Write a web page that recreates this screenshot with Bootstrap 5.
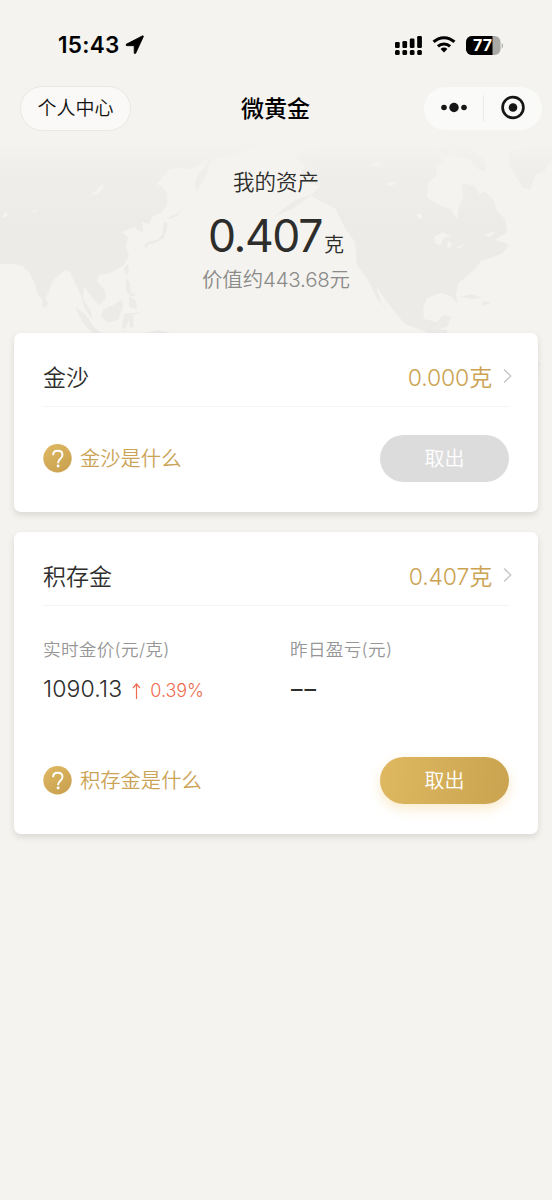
<!DOCTYPE html>
<html lang="zh-CN">
<head>
<meta charset="utf-8">
<meta name="viewport" content="width=device-width, initial-scale=1">
<title>微黄金</title>
<link href="https://cdn.jsdelivr.net/npm/bootstrap@5.3.0/dist/css/bootstrap.min.css" rel="stylesheet">
<style>
  body { background: #f4f3ef; color: #2d2d2b; font-family: Inter, "Noto Sans CJK SC", sans-serif; min-height: 1200px; overflow-x: hidden; }
  .cjk-light { font-weight: 350; }
  .status-bar { height: 78px; padding: 12px 49px 0 58px; color: #000; }
  .clock { font-size: 22.5px; font-weight: 600; line-height: 30px; letter-spacing: .3px; }
  .app-bar { height: 60px; padding: 0 10px 0 20px; }
  .app-bar > * { flex: none; }
  .profile-pill { width: 111px; height: 45px; border: 1px solid #e9e8e5; background: #faf9f7; color: #111; font-size: 19px; line-height: 44px; font-weight: 350; }
  .capsule { width: 118px; height: 43px; background: #fafaf8; }
  .page-title { font-size: 23px; line-height: 30px; color: #000; width: 120px; font-weight: 500; margin: 2px 4px 0 0; }
  .hero { height: 195px; padding-top: 28px; }
  .world { position: absolute; top: 0; left: 0; z-index: -1; }
  .hero-label { font-size: 21.5px; line-height: 32px; }
  .hero-amount { font-size: 44.5px; line-height: 54px; font-weight: 400; margin-top: 11px; letter-spacing: -1.4px; }
  .hero-unit { font-size: 20px; letter-spacing: 0; margin-left: 2px; }
  .hero-value { font-size: 20.5px; line-height: 28px; color: #8b8b89; margin-top: -6px; letter-spacing: -.2px; }
  .asset { margin: 0 14px 20px 14px; padding: 0 29px; border-radius: 7px; background: #fff; box-shadow: 0 3px 6px rgba(60,55,40,.14); }
  .asset-head { height: 74px; padding-top: 14px; border-bottom: 1px solid #f4f4f4; }
  .asset-name { font-size: 23px; line-height: 30px; }
  .asset-amount { font-size: 23px; line-height: 30px; color: #cca353; letter-spacing: -.15px; }
  .chev { margin: -5px -3px 0 11px; }
  .asset-foot { height: 47px; }
  .gold-link { font-size: 20.3px; line-height: 28px; color: #cba355; }
  .take-btn { width: 129px; height: 47px; padding: 0; border: 0; border-radius: 24px; font-size: 20px; color: #fff; background: linear-gradient(100deg, #dfb861, #caa350); box-shadow: 0 5px 12px rgba(240,190,90,.3); }
  .take-btn:disabled { background: #dcdcdc; color: #fff; opacity: 1; box-shadow: none; }
  .metric-label { font-size: 17.6px; line-height: 24px; color: #969696; letter-spacing: .3px; }
  .metric-value { font-size: 23px; line-height: 30px; margin-top: 10px; letter-spacing: .15px; }
  .rise { font-size: 18px; color: #ee6b50; letter-spacing: -.05px; }
  .no-data { letter-spacing: 2px; padding: 2px 0 0 1px; }
</style>
</head>
<body>
<svg width="0" height="0" class="position-absolute">
  <defs>
    <linearGradient id="gold" x1="0" y1="0" x2="0.6" y2="1"><stop stop-color="#e0b963"/><stop offset="1" stop-color="#cba351"/></linearGradient>
    <symbol id="help" viewBox="0 0 29 29">
      <circle cx="14.5" cy="14.2" r="14.2" fill="url(#gold)"/>
      <path d="M10.100 11.200C10.100 8.300 12 6.800 14.800 6.800s4.700 1.600 4.700 4.300c0 3.400-4.400 4-4.400 7.600v.6" fill="none" stroke="#fff" stroke-width="1.900"/>
      <circle cx="15.100" cy="22" r="1.450" fill="#fff"/>
    </symbol>
    <symbol id="chevron" viewBox="0 0 9 16"><path d="M1 1.500 7.700 8 1 14.500" fill="none" stroke="#c6c6c6" stroke-width="1.400"/></symbol>
  </defs>
</svg>

<header>
  <div class="status-bar d-flex align-items-center justify-content-between">
    <div class="d-flex align-items-center">
      <span class="clock">15:43</span>
      <svg style="margin-left:5px" width="20" height="20" viewBox="0 0 20 20"><path d="M18.300 1.700 10.800 18c-.5 1-1.600.8-1.600-.3v-7H2C.8 10.700.6 9.500 1.600 9.100L17.200 1c.9-.4 1.500 0 1.100.7Z" stroke="#000" stroke-width=".8"/></svg>
    </div>
    <div class="d-flex align-items-center">
      <svg width="27" height="19" viewBox="0 0 27 19">
        <rect y="6" width="4.700" height="6" rx="1.300"/><rect x="7.400" y="5" width="4.700" height="7" rx="1.300"/><rect x="14.800" y="2.500" width="4.700" height="9.500" rx="1.300"/><rect x="22.200" width="4.700" height="12" rx="1.300"/>
        <rect y="14" width="4.700" height="5" rx="1.500"/><rect x="7.400" y="14" width="4.700" height="5" rx="1.500"/><rect x="14.800" y="14" width="4.700" height="5" rx="1.500"/><rect x="22.200" y="14" width="4.700" height="5" rx="1.500"/>
      </svg>
      <svg style="margin:0 9px 2px 9px" width="26" height="18" viewBox="0 0 26 18" fill="none" stroke="#000" stroke-width="3">
        <path d="M2.600 6.900a14.800 14.800 0 0 1 20.800 0M6.900 11.400a8.700 8.700 0 0 1 12.200 0"/><path d="M13 17.400 9.600 14a4.800 4.800 0 0 1 6.800 0Z" fill="#000" stroke="none"/>
      </svg>
      <svg width="37" height="19" viewBox="0 0 37 19">
        <defs><clipPath id="cell"><rect width="34.500" height="19" rx="5.800"/></clipPath></defs>
        <g clip-path="url(#cell)"><rect width="35" height="19" fill="#a9a9a7"/><rect width="26.500" height="19"/></g>
        <path d="M35.700 7v5.500q1.300-.7 1.300-2.700T35.700 7" fill="#a9a9a7"/>
        <text x="16.500" y="15.200" text-anchor="middle" font-family="Inter, sans-serif" font-size="16" font-weight="700" fill="#fff">77</text>
      </svg>
    </div>
  </div>
  <nav class="app-bar d-flex align-items-center justify-content-between">
    <a class="profile-pill rounded-pill text-center text-decoration-none" href="#">个人中心</a>
    <div class="page-title text-center">微黄金</div>
    <div class="capsule rounded-pill">
      <svg class="d-block" width="118" height="43" viewBox="0 0 118 43" fill="#161616">
        <circle cx="20" cy="20.500" r="2.800"/><circle cx="30" cy="20.500" r="4.700"/><circle cx="40" cy="20.500" r="2.800"/>
        <path d="M59.500 8v27" stroke="#ececea"/>
        <circle cx="89" cy="20.500" r="10.400" fill="none" stroke="#161616" stroke-width="2.700"/><circle cx="89" cy="20.500" r="4.300"/>
      </svg>
    </div>
  </nav>
</header>

<main>
  <section class="hero position-relative text-center">
    <svg class="world" width="552" height="250" viewBox="0 138 552 250">
      <defs><linearGradient id="land" gradientUnits="userSpaceOnUse" x1="0" y1="138" x2="0" y2="225"><stop stop-color="#edece9" stop-opacity="0"/><stop offset=".45" stop-color="#edece9" stop-opacity=".75"/><stop offset="1" stop-color="#ecebe8"/></linearGradient></defs>
      <g fill="url(#land)">
        <path d="M0 138H268L252 149 238 154 224 156 214 159 209 165 207 174 202 183 196 191 195 182 198 174 204 168 209 160 203 160 198 166 190 169 181 168 170 169 164 176 156 184 163 187 167 194 167 205 162 212 153 216 149 224 142 222 143 232 138 230 135 227 129 229 122 232 128 237 126 248 129 256 124 265 114 271 106 274 99 275 97 281 105 291 106 298 99 305 95 301 88 292 84 286 83 299 91 311 92 319 84 307 80 293 75 283 70 272 65 270 58 276 52 282 49 291 44 302 38 294 34 282 29 272 22 266 15 264 0 264Z"/>
        <path d="M145 244l5-3 7-1 5-5 1-7 1-6 3 1 0 6-3 9-7 4-9 3-2 4-2-3ZM167 218l9-4 7-6-6 8-7 3ZM43 298l5 4-2 6-4-2ZM124 268l4-4 1 7-3 5ZM126 278l4 5 1 9 5 3-4 2-6-6ZM75 307l10 7 10 14 8 6-8 2-12-13ZM103 310l10-5 9-5 1 8-5 12-10 3-7-7ZM124 314l17-2-8 3 1 12-4 1-1-8-4 9-3-1ZM103 334l20 2 18-2 17-4 16 4 14 5-14 2-26-2-24 1ZM129 296l7 5 1 8-8-2Z"/>
        <path d="M274 217l20-9 16-12 10-10-11-3-9-8 5-10-12-8 12-6 30-7 80 1 34 6-5 10-8 5 1 9-9 8-1 15 12 7 12 4 6 10 2-13 4-8-1-15 13 3 4 8 5-3 9 8 4 12 8 8 2 13-12 8 8 2 6 3-6 8-12 5-10 3-6 8-8 7-9 8-2 11 2 9-7-8-10-3-14 5-4 10 1 11 13 3 6-7 8 2-4 10-9 2 9 1 1 13 13 3 10-5 19 0 16 11 20 1 14 10-3 16-10 7-13 9-30-2-18-14-4-24-6-8-14-5-16-10-21-8-10-12-11-14-8-13 5 17 6 8-10-11-8-17-12-17-2-23-10-14-10-20-13-6-12-7-15 5-20 16Z"/>
        <path d="M509 151l43-8v17l-8 11-9 4-5 15-8-3-8-14-5-10ZM460 297l11-3 11 4-10 1ZM482 301l9 2-8 3ZM438 149l18-7 14 5 14 13 2 12-8-3-9-10-14-3-12 2Z"/>
      </g>
      <path d="M92 194l5-4 5-6 2 2-5 7-5 2ZM2 217l4-5 2 3-4 3ZM32 211l6-1-4 3ZM370 165l8-3 4 2-5 3ZM386 184l7-3 4 2-6 3ZM416 215l5-2 2 5-4 1ZM434 237l9-5 8 4-7 2-4 7-4-1ZM448 240l5 5-6 4ZM456 247l9-3-5 4ZM484 235l12-4-6 6Z" fill="#f4f3ef"/>
      <path d="M442 162l-6-13 12 7 6-9 4 14 9-4-3 12 12 4-7 11-9-10-9 1Z" fill="#f4f3ef" opacity=".65"/>
    </svg>
    <div class="hero-label cjk-light">我的资产</div>
    <div class="hero-amount">0.407<span class="hero-unit cjk-light">克</span></div>
    <div class="hero-value cjk-light">价值约443.68元</div>
  </section>

  <section class="asset" style="height:179px">
    <div class="asset-head d-flex align-items-start justify-content-between">
      <div class="asset-name cjk-light mt-3">金沙</div>
      <div class="d-flex align-items-center mt-3"><span class="asset-amount cjk-light">0.000克</span><svg class="chev" width="9" height="16"><use href="#chevron"/></svg></div>
    </div>
    <div class="asset-foot d-flex align-items-center justify-content-between" style="margin-top:28px">
      <div class="d-flex align-items-center"><svg width="29" height="29"><use href="#help"/></svg><span class="gold-link cjk-light ms-2">金沙是什么</span></div>
      <button class="btn take-btn cjk-light" disabled>取出</button>
    </div>
  </section>

  <section class="asset" style="height:302px">
    <div class="asset-head d-flex align-items-start justify-content-between">
      <div class="asset-name cjk-light mt-3">积存金</div>
      <div class="d-flex align-items-center mt-3"><span class="asset-amount cjk-light">0.407克</span><svg class="chev" width="9" height="16"><use href="#chevron"/></svg></div>
    </div>
    <div class="row gx-0" style="height:107px;padding-top:32px">
      <div class="col" style="flex:0 0 247px">
        <div class="metric-label cjk-light">实时金价(元/克)</div>
        <div class="metric-value cjk-light d-flex align-items-center">1090.13<svg style="margin:3px 9px 0 10px" width="9" height="16" viewBox="0 0 9 16" fill="none" stroke="#ee6b50" stroke-width="1.200"><path d="M4.500 16V1M1 5l3.500-4L8 5"/></svg><span class="rise" style="padding-top:4px">0.39%</span></div>
      </div>
      <div class="col">
        <div class="metric-label cjk-light">昨日盈亏(元)</div>
        <div class="metric-value no-data">––</div>
      </div>
    </div>
    <div class="asset-foot d-flex align-items-center justify-content-between" style="margin-top:44px">
      <div class="d-flex align-items-center"><svg width="29" height="29"><use href="#help"/></svg><span class="gold-link cjk-light ms-2">积存金是什么</span></div>
      <button class="btn take-btn cjk-light">取出</button>
    </div>
  </section>
</main>
<script src="https://cdn.jsdelivr.net/npm/bootstrap@5.3.0/dist/js/bootstrap.bundle.min.js"></script>
</body>
</html>
